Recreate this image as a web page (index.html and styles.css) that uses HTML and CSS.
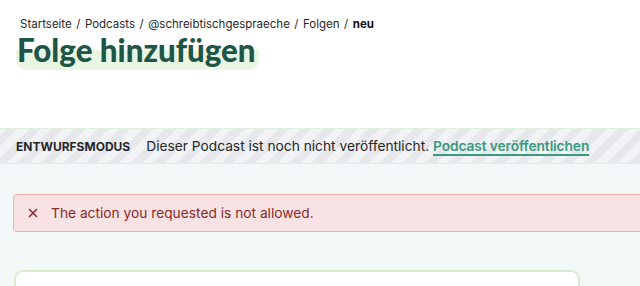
FILE: index.html
```html
<!DOCTYPE html>
<html lang="de">
<head>
<meta charset="utf-8">
<title>Folge hinzufügen</title>
<link rel="stylesheet" href="styles.css">
</head>
<body>
<header class="page-header">
  <nav class="breadcrumb">
    <span>Startseite</span><span class="sep">/</span><span>Podcasts</span><span class="sep">/</span><span>@schreibtischgespraeche</span><span class="sep">/</span><span>Folgen</span><span class="sep">/</span><span class="current">neu</span>
  </nav>
  <h1 class="title"><span class="title-text">Folge hinzufügen</span></h1>
</header>
<div class="draft-banner">
  <span class="draft-label">ENTWURFSMODUS</span>
  <span class="draft-text">Dieser Podcast ist noch nicht veröffentlicht. <a class="draft-link" href="#">Podcast veröffentlichen</a></span>
</div>
<main class="content">
  <div class="alert"><svg class="alert-icon" width="10" height="10" viewBox="0 0 10 10"><path d="M1 1 L9 9 M9 1 L1 9" stroke="#882a2a" stroke-width="1.5" fill="none"/></svg><span>The action you requested is not allowed.</span></div>
  <div class="card"></div>
</main>
</body>
</html>
```
FILE: styles.css
```css
html, body {
  margin: 0;
  padding: 0;
}
body {
  font-family: Inter, "Noto Sans", sans-serif;
  color: #1f2937;
  background: #f2f8f8;
  overflow: hidden;
  height: 286px;
}
.page-header {
  background: #ffffff;
  height: 128px;
  padding: 16px 0 0 16px;
  box-sizing: border-box;
}
.breadcrumb {
  font-size: 11.5px;
  line-height: 16px;
  color: #27272a;
  margin-left: 4px;
}
.breadcrumb .sep {
  margin: 0 4.5px;
}
.breadcrumb .current {
  font-weight: 700;
  color: #111;
}
.title {
  margin: 0;
  font-family: Lato, sans-serif;
  font-weight: 900;
  font-size: 31.3px;
  line-height: 36px;
  color: #1e5546;
}
.title-text {
  display: inline-block;
  padding: 0 3px 2px 1px;
  background: linear-gradient(to bottom, transparent 0, transparent 48%, #e9f6e4 48%, #e9f6e4 100%);
  border-radius: 0 0 10px 10px;
}
.draft-banner {
  height: 36px;
  box-sizing: border-box;
  border-top: 1px solid #e2eee0;
  border-bottom: 1px solid #e2eee0;
  display: flex;
  align-items: center;
  gap: 16px;
  padding: 0 16px;
  background: repeating-linear-gradient(-45deg, #e6e8eb 0, #e6e8eb 8px, #f2f3f5 8px, #f2f3f5 16px);
  white-space: nowrap;
  overflow: hidden;
}
.draft-label {
  font-size: 12px;
  font-weight: 700;
  color: #27272a;
}
.draft-text {
  font-size: 13.75px;
  color: #27272a;
}
.draft-link {
  color: #3a9a80;
  font-weight: 600;
  letter-spacing: -0.1px;
  text-decoration: underline;
  text-decoration-thickness: 2px;
  text-underline-offset: 3px;
}
.content {
  padding: 30px 0 0 13px;
  overflow: hidden;
  height: 122px;
  box-sizing: border-box;
}
.alert {
  width: calc(100% + 20px);
  height: 38px;
  box-sizing: border-box;
  display: flex;
  align-items: center;
  gap: 13px;
  padding: 0 14px;
  background: #f9e2e3;
  border: 1px solid #f2a9aa;
  border-radius: 4px;
  color: #882a2a;
  font-size: 13.75px;
}
.alert-icon {
  flex: none;
}
.card {
  margin-top: 38px;
  margin-left: 1px;
  width: 566px;
  height: 60px;
  box-sizing: border-box;
  background: #ffffff;
  border: 2px solid #d8ebd1;
  border-radius: 9px;
}
```
